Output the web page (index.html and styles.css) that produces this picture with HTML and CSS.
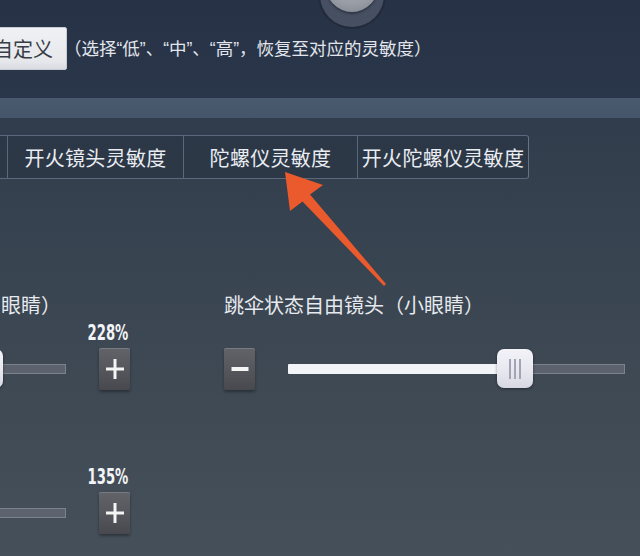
FILE: index.html
```html
<!DOCTYPE html>
<html lang="zh-CN">
<head>
<meta charset="utf-8">
<title>灵敏度设置</title>
<link rel="stylesheet" href="styles.css">
</head>
<body>
<div class="screen">
  <header class="top">
    <div class="knob"><span class="knob-ring"></span><span class="knob-cap"></span></div>
    <div class="preset">
      <button class="preset-btn">自定义</button>
      <p class="hint">（选择<span class="q">“</span>低<span class="q">”</span>、<span class="q">“</span>中<span class="q">”</span>、<span class="q">“</span>高<span class="q">”</span>，恢复至对应的灵敏度）</p>
    </div>
  </header>
  <div class="band"></div>
  <nav class="tabs-wrap">
    <div class="tabs">
      <span class="tab stub"></span>
      <span class="tab t1">开火镜头灵敏度</span>
      <span class="tab t2">陀螺仪灵敏度</span>
      <span class="tab t3">开火陀螺仪灵敏度</span>
    </div>
  </nav>
  <section class="sliders">
    <div class="col col-left">
      <div class="setting">
        <div class="label">眼睛）</div>
        <div class="pct"><span>228%</span></div>
        <div class="ctrl">
          <div class="track slice"><span class="rest"></span><span class="thumb" style="left:-33px"><i></i><i></i><i></i></span></div>
          <button class="step"><svg width="20" height="22" viewBox="0 0 20 22"><path d="M10 1v20M1 11h18" stroke="#f4f4f4" stroke-width="3" fill="none"/></svg></button>
        </div>
      </div>
      <div class="setting">
        <div class="label">&nbsp;</div>
        <div class="pct"><span>135%</span></div>
        <div class="ctrl">
          <div class="track slice"><span class="rest"></span></div>
          <button class="step"><svg width="20" height="22" viewBox="0 0 20 22"><path d="M10 1v20M1 11h18" stroke="#f4f4f4" stroke-width="3" fill="none"/></svg></button>
        </div>
      </div>
    </div>
    <div class="col col-right">
      <div class="setting">
        <div class="label">跳伞状态自由镜头（小眼睛）</div>
        <div class="pct"></div>
        <div class="ctrl">
          <button class="step"><svg width="18" height="6" viewBox="0 0 18 6"><path d="M0.5 3h17" stroke="#f4f4f4" stroke-width="4" fill="none"/></svg></button>
          <div class="track long"><span class="fill" style="width:67.4%"></span><span class="rest"></span><span class="thumb" style="left:calc(67.4% - 18px)"><i></i><i></i><i></i></span></div>
        </div>
      </div>
    </div>
  </section>
  <svg class="arrow" width="640" height="556" viewBox="0 0 640 556">
    <polygon points="285,172 323,185 310,194.5 386,284 384,286 302.5,201.5 290,211" fill="#ea5a2c"/>
  </svg>
</div>
</body>
</html>
```
FILE: styles.css
```css
* { box-sizing: border-box; }
html, body { margin: 0; padding: 0; }
body {
  width: 640px;
  height: 556px;
  overflow: hidden;
  font-family: "Noto Sans CJK SC", "Noto Sans", sans-serif;
  color: #e8ebf0;
}
.screen {
  position: relative;
  width: 640px;
  height: 556px;
  overflow: hidden;
  background: linear-gradient(180deg, #313c4b 0px, #313d4c 130px, #36424f 220px, #3e4954 380px, #46505a 556px);
}
.top {
  position: relative;
  height: 98px;
  background: linear-gradient(180deg, #273246 0, #2a3649 100%);
}
.knob-ring, .knob-cap {
  position: absolute;
  border-radius: 50%;
}
.knob-ring {
  left: 320px;
  top: -37px;
  width: 64px;
  height: 64px;
  background: #465062;
  box-shadow: 0 0 0 2px rgba(30, 38, 52, 0.6);
}
.knob-cap {
  left: 325px;
  top: -46px;
  width: 54px;
  height: 58px;
  background: radial-gradient(circle at 50% 40%, #a9adb5 0, #999da6 60%, #7a7f89 100%);
  box-shadow: 0 2px 2px rgba(40, 46, 58, 0.7);
}
.preset {
  display: flex;
  align-items: center;
  padding-top: 27px;
}
.preset-btn {
  height: 43px;
  margin: 0 0 0 -14px;
  padding: 0 13px 0 6px;
  border: 1px solid #c8ccd3;
  border-radius: 2px;
  background: linear-gradient(180deg, #f0f1f4 0, #e6e8ec 80%, #d9dce2 100%);
  color: #373c45;
  font-family: "Noto Sans CJK SC", sans-serif;
  font-size: 20px;
  line-height: 1;
}
.hint {
  margin: 0 0 0 -3px;
  font-size: 17.5px;
  line-height: 24px;
  color: #e2e6ec;
}
.q {
  font-family: "Liberation Sans", sans-serif;
}
.band {
  height: 20px;
  background: linear-gradient(180deg, #4a5a6e 0, #46566a 100%);
}
.tabs-wrap {
  padding-top: 17px;
}
.tabs {
  display: flex;
  width: 529px;
  height: 44px;
  border-top: 1px solid #5a677d;
  border-bottom: 1px solid #5a677d;
  border-right: 1px solid #66728a;
  border-radius: 0 3px 3px 0;
  background: rgba(34, 44, 60, 0.35);
}
.tab {
  display: flex;
  align-items: center;
  justify-content: center;
  font-size: 20px;
  letter-spacing: 0.3px;
  color: #e9edf2;
  border-right: 1px solid #5a677c;
}
.stub { width: 8px; }
.t1 { width: 176px; }
.t2 { width: 174px; }
.t3 { flex: 1; border-right: none; }
.sliders {
  display: flex;
  padding-top: 115px;
}
.col-left { width: 130px; }
.col-right { margin-left: 94px; }
.setting {
  display: flex;
  flex-direction: column;
}
.setting + .setting { margin-top: 48px; }
.label {
  height: 24px;
  font-size: 20px;
  line-height: 22px;
  color: #e6e9ee;
  white-space: nowrap;
}
.col-left .label { padding-left: 1px; }
.pct {
  height: 30px;
  text-align: right;
  padding-right: 2px;
}
.pct span {
  display: inline-block;
  font-family: "DejaVu Sans Condensed", "DejaVu Sans", sans-serif;
  font-weight: bold;
  font-size: 21px;
  line-height: 30px;
  color: #f2f4f6;
  transform: scaleX(0.7);
  transform-origin: right center;
}
.ctrl {
  display: flex;
  align-items: center;
  gap: 33px;
  height: 42px;
}
.step {
  display: flex;
  align-items: center;
  justify-content: center;
  flex: none;
  width: 31px;
  height: 42px;
  margin: 0;
  padding: 0;
  border: none;
  border-radius: 2px;
  background: linear-gradient(180deg, #616369 0, #55575c 50%, #48494e 100%);
  box-shadow: inset 0 1px 0 rgba(255, 255, 255, 0.16), 0 2px 3px rgba(0, 0, 0, 0.35);
}
.track {
  position: relative;
  display: flex;
  flex: none;
  height: 10px;
}
.slice { width: 66px; }
.long { width: 337px; }
.fill {
  background: #f3f4f7;
  border-radius: 1px 0 0 1px;
}
.rest {
  flex: 1;
  background: #5c636e;
  border: 1px solid #7c828d;
}
.slice .rest { border-left: none; }
.thumb {
  position: absolute;
  top: -15px;
  width: 36px;
  height: 39px;
  display: flex;
  align-items: center;
  justify-content: center;
  gap: 3px;
  border-radius: 7px;
  background: linear-gradient(180deg, #f2f2f8 0, #e6e6ef 60%, #d8d8e4 100%);
  box-shadow: 0 1px 3px rgba(0, 0, 0, 0.4);
}
.thumb i {
  display: block;
  width: 2px;
  height: 20px;
  background: #a2a4b3;
}
.arrow {
  position: absolute;
  left: 0;
  top: 0;
  pointer-events: none;
}
```
